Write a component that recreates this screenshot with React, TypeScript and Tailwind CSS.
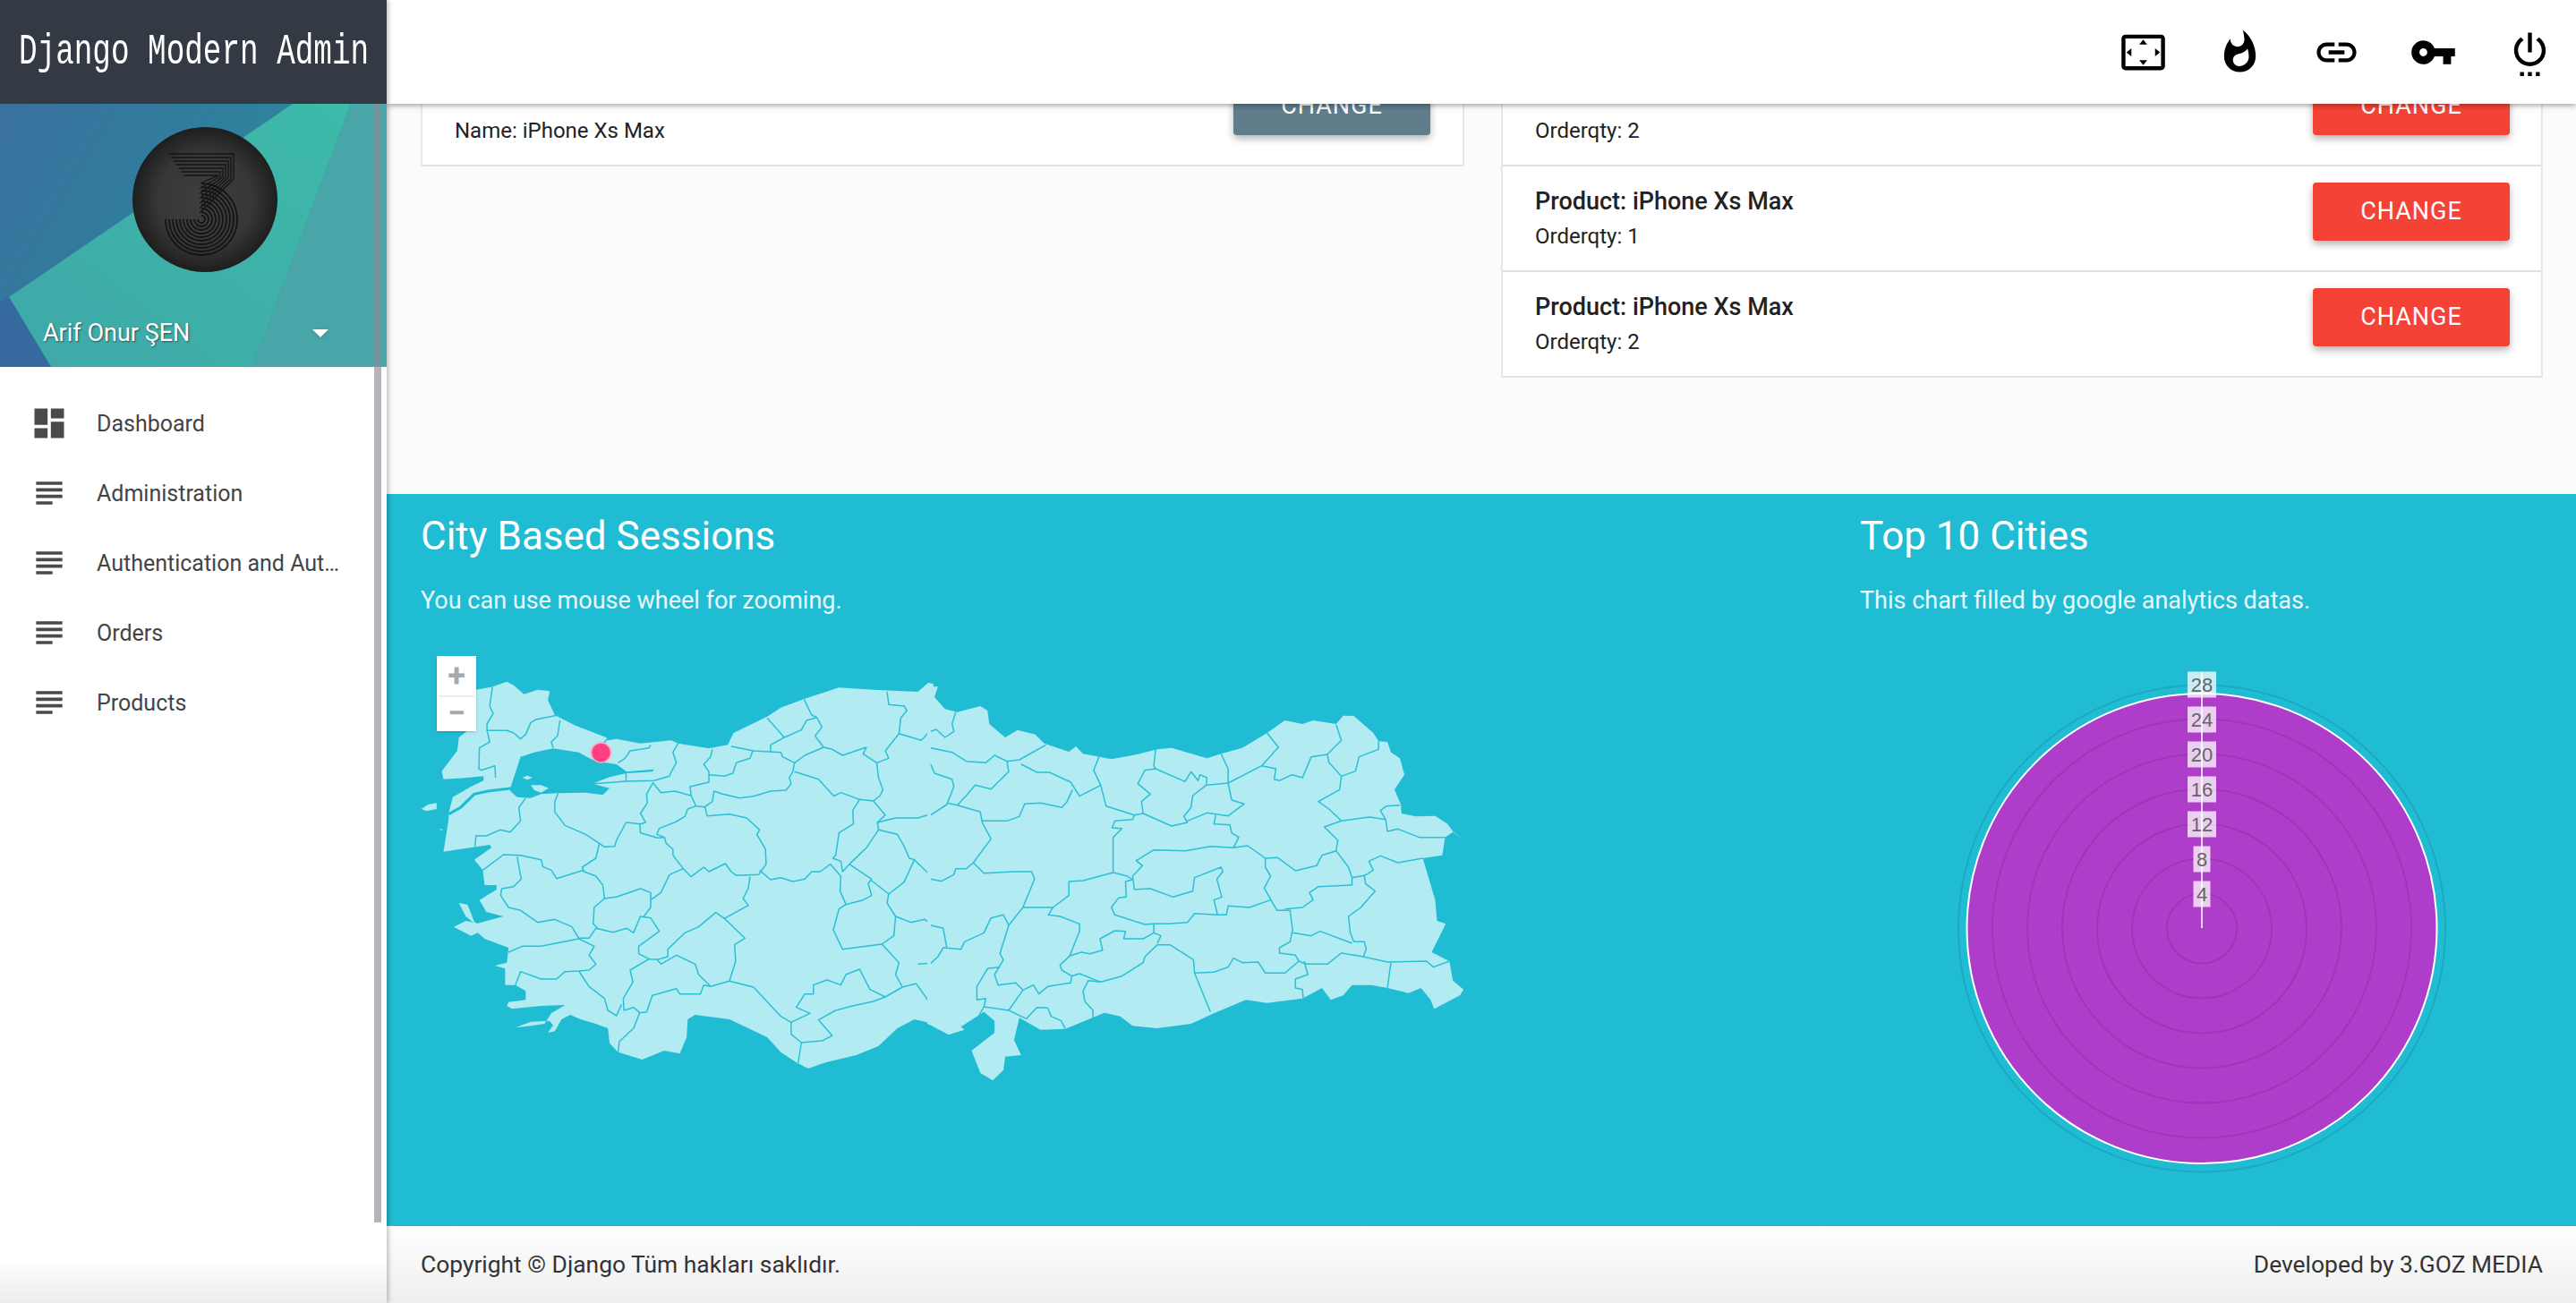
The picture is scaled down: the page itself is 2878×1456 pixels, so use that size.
import React from 'react';

const westLand =
  '240,215 290,205 330,188 350,200 380,230 420,215 455,220 450,250 470,300 530,335 620,375 625,385 650,380 720,395 810,385 830,395 920,412 975,400 992,360 1090,305 1130,275 1200,245 1300,208 1400,215 1530,222 1560,192 1575,195 1575,1335 1520,1320 1470,1350 1415,1410 1350,1440 1260,1465 1210,1485 1175,1465 1130,1430 1090,1380 980,1320 880,1305 858,1320 855,1380 835,1435 790,1425 725,1455 655,1430 630,1400 625,1350 590,1335 545,1320 515,1305 490,1320 470,1360 450,1365 465,1340 455,1325 400,1328 355,1348 400,1342 440,1335 460,1300 500,1272 430,1275 345,1285 330,1275 335,1262 385,1255 385,1225 355,1205 325,1205 325,1150 295,1140 330,1130 335,1080 265,1050 245,1030 225,1040 175,1010 210,990 245,998 320,975 270,960 250,920 300,885 300,870 265,870 260,820 235,785 285,745 280,735 145,758 160,650 160,630 172,575 225,540 262,520 262,505 215,510 145,515 140,488 185,420 190,375 240,330';

const marmara =
  '340,545 370,440 410,425 465,412 540,425 580,450 610,458 650,465 680,490 760,482 755,490 680,495 630,508 580,530 630,545 610,568 560,560 480,562 430,565 400,578 360,575 340,555';

const eastLand =
  '-10,85 20,85 10,120 40,160 75,170 140,150 160,165 165,210 210,255 245,230 295,245 320,275 390,303 410,285 430,310 510,328 570,315 640,295 680,290 780,325 820,310 880,290 950,240 1000,198 1050,210 1080,198 1145,210 1165,182 1195,183 1250,240 1265,268 1290,270 1300,305 1325,325 1338,380 1310,430 1328,480 1330,510 1370,520 1425,518 1460,545 1475,570 1503,597 1475,572 1453,590 1445,650 1390,660 1405,720 1425,800 1430,870 1455,880 1415,975 1465,1005 1475,1070 1505,1100 1495,1120 1430,1160 1422,1165 1412,1135 1385,1095 1350,1112 1290,1095 1245,1085 1190,1085 1165,1120 1130,1135 1105,1095 1050,1130 950,1145 890,1135 800,1180 735,1215 640,1230 570,1222 535,1190 490,1178 380,1232 310,1235 250,1195 235,1270 255,1320 210,1325 205,1370 175,1405 140,1380 115,1305 180,1245 180,1205 150,1175 85,1225 95,1235 50,1252 0,1220 -10,1215';

const westLines = [
  '288,205 280,270 290,295 272,330 272,352 330,352 350,360 370,380 385,365 400,325 415,315 480,300',
  '272,352 280,390 250,410 248,480 255,485 295,470 297,510',
  '485,318 478,370 460,390 465,410',
  '625,378 600,410',
  '750,400 745,410 690,420 675,445 655,460',
  '830,395 815,425 825,460 810,490 805,505 760,520 680,522 610,528 580,530',
  '678,490 678,522',
  '755,525 780,560 820,555 868,570 882,605',
  '755,530 738,565 740,595 720,630 735,660 720,665 678,660 650,720 645,740 615,742 600,730 560,700 500,670 470,625 470,590 480,562',
  '930,415 925,440 905,465 920,490 920,525 865,540 868,570',
  '920,500 965,505 990,495 1000,460 1040,445 1048,420',
  '985,405 1050,420 1130,425 1135,440 1170,460 1165,490 1155,510 1160,530 1145,552 1100,555 1050,572 1010,578 960,565 935,555 930,590 908,608 882,605 858,615 850,640 820,660 775,680 768,700 790,710 770,712 720,695 718,665',
  '1090,310 1140,375 1100,400 1100,425',
  '1140,375 1190,350 1205,318 1235,308 1250,340 1230,370 1255,408 1200,435 1170,460',
  '1198,248 1220,300 1235,308',
  '1255,408 1280,415 1310,435 1380,408 1370,430 1410,460 1445,445 1435,420 1475,362 1480,310 1498,285 1490,270 1445,265 1440,222',
  '1475,362 1540,385 1568,350',
  '1410,460 1415,510 1428,550 1420,570 1400,588 1360,583 1305,560 1285,572 1240,515 1170,490',
  '1360,583 1340,620 1342,665 1300,695 1290,770 1282,780 1305,790 1310,825 1330,800',
  '1400,588 1435,635 1412,660 1415,685 1380,745 1330,800 1395,850 1385,865 1395,905 1370,920 1320,935 1303,890 1305,840 1275,800 1245,825 1220,825 1200,850 1165,858 1130,845 1100,852 1068,820',
  '908,608 915,638 980,632 1030,645 1068,685 1060,700 1085,750 1087,800 1065,835 1000,838 985,825 968,798 920,825 905,810 868,842 845,815 815,770 815,750 795,730 790,710',
  '845,815 805,835 780,895 750,920 750,895 720,882 650,910 615,915 610,870 590,840 555,825 550,810 590,780 600,730',
  '555,820 475,848 460,820 435,808 430,785 370,770 320,768 260,820',
  '360,775 372,850 350,875 315,882 312,905 335,945 370,955 420,995 470,985 520,1010 540,1048 570,1048 590,1015 640,1028 680,1015 700,1030 720,975 750,980 775,1025 715,1075 715,1100 745,1118 690,1155 698,1195 670,1250 672,1290 700,1280 718,1298 700,1350 658,1395 655,1430',
  '615,915 585,945 582,1000 595,1015',
  '750,920 750,945 730,975',
  '1040,842 1035,880 1020,915 1035,938 965,982 940,962 890,1010 850,1030 800,1085 800,1110 770,1120 745,1118',
  '965,982 1025,1048 995,1070 998,1125 980,1192 925,1210 890,1170 880,1135 825,1105 780,1135 770,1122',
  '980,1192 1050,1212 1130,1310 1160,1330 1215,1300 1175,1280 1200,1235 1225,1235 1225,1205 1265,1188 1305,1205 1320,1170 1360,1152 1390,1220 1435,1245 1485,1212 1525,1200',
  '925,1210 905,1205 895,1235 835,1235 825,1217 755,1240 738,1295 718,1298',
  '1160,1330 1160,1370 1190,1398 1250,1392 1280,1375 1240,1322 1290,1290 1340,1275 1400,1260 1435,1245',
  '1190,1398 1180,1470',
  '1320,935 1300,950 1283,1020 1310,1085 1425,1068 1460,1040 1465,975 1440,930 1445,900',
  '1395,855 1445,900 1490,860 1520,785 1505,780 1490,740 1470,700 1415,685',
  '1425,1068 1475,1130 1465,1170 1485,1212',
  '540,1158 570,1210 615,1250 625,1290 650,1308 665,1270',
  '335,1095 375,1075 430,1075 540,1050 585,1075 570,1105 590,1135 570,1155 540,1158 500,1160 475,1185 430,1185 370,1160 355,1205',
  '237,740 240,705 270,705 310,685 340,692 370,655 365,610 385,578',
  '1465,975 1510,995 1550,985 1568,1000',
  '1520,785 1560,830 1568,870',
  '1412,660 1465,645 1530,645 1568,632',
  '1530,1135 1568,1132',
  '1525,1200 1568,1270',
];

const eastLines = [
  '70,170 60,210 65,235 40,255 15,228 0,235',
  '0,290 60,305 100,335 155,340 180,315 215,335 250,330 325,280',
  '0,345 10,375 60,395 65,420 45,480 0,515',
  '45,475 75,482 140,505 145,540 170,595 120,675 100,695 70,695 65,715 30,737 0,730',
  '75,482 100,450 125,415 170,428 220,370 215,335',
  '255,345 300,372 335,372 395,405 420,452 480,415 460,365 475,320',
  '400,430 385,470 370,490 310,475 265,478 250,520 215,535 145,535',
  '480,415 495,485 535,500 575,515 570,530 520,535 512,558 540,560 515,590 515,705',
  '575,515 600,510 680,552 725,540 715,520 735,490 740,450 778,415 780,390 760,380 755,400 735,370 718,403 635,360 605,365 585,410 620,445 595,470 600,510',
  '635,295 630,350 635,360',
  '820,310 840,360 840,408 780,415',
  '840,408 935,350 982,288 950,240',
  '935,350 975,360 970,395 985,400 1020,380 1050,390 1075,320 1120,312 1160,265 1145,212',
  '1120,312 1125,340 1160,385 1200,368 1210,320 1265,295 1265,268',
  '840,408 850,465 885,478 840,518 780,508 725,535',
  '805,515 800,545 845,548 850,575 870,590 855,625 790,620 720,635 630,632 580,668 598,685 570,720 575,765 620,762 685,790 740,770 745,725 820,690 825,705 808,730 822,790 800,800 810,850 745,845 725,875 670,880 630,880 605,882 520,850 510,825 530,793 552,790 550,738 570,732 555,720 515,708 430,735 390,738 390,785 345,825 260,825',
  '855,625 895,618 945,660 945,690 960,720 942,760 978,835 1015,835 1022,900 1015,940 985,960 985,978 1030,985 1040,1005 1000,1045 945,1045 925,1008 880,1010 855,995 840,1025 800,1042 745,1045 742,1000 675,950 640,950 605,990 600,1010 580,1025 540,1055 480,1075 420,1047 398,1055 370,1035 365,1018 392,988',
  '945,660 980,658 1030,702 1090,685 1105,650 1145,635 1150,600 1112,555 1160,535 1125,495 1095,470 1155,430 1160,385',
  '1160,535 1240,522 1285,530 1290,570 1320,562 1380,590 1453,590',
  '1285,530 1270,500 1288,485 1325,482',
  '1145,635 1180,690 1190,725 1225,718 1250,700 1238,670 1270,652 1320,675 1390,660',
  '1190,750 1095,755 1070,775 1080,800 1050,825 1000,830',
  '1190,725 1190,750',
  '1225,718 1228,745 1255,770 1215,825 1180,855 1185,910 1195,940 1225,940 1230,965 1222,990 1290,1008 1400,1005 1420,1025 1465,1005',
  '1022,910 1075,920 1100,905 1190,945',
  '1040,1005 1060,1015 1120,1015 1160,978 1222,990',
  '1300,1010 1290,1095',
  '1055,1005 1065,1050 1030,1065 1030,1095 1050,1100 1052,1130',
  '745,1045 790,1175',
  '960,800 900,825 840,820 835,850 810,850',
  '630,880 630,910 650,920 640,945',
  '630,910 600,930 545,930 550,905 520,903 478,930 485,968 450,980 425,975 392,988 420,905 420,880 365,855 332,850 345,825',
  '260,825 220,885 205,850 170,860 150,910 95,940 85,965 35,960 20,990 0,1012',
  '120,675 150,710 235,705 285,705 293,730 260,825',
  '220,885 195,980 205,1000 180,1050 190,1085 240,1078 260,1102 290,1085 305,1115 330,1090 395,1078 398,1055',
  '195,1025 160,1030 130,1090 130,1135 155,1130 150,1158 135,1190',
  '260,1102 220,1170 150,1158',
  '220,1170 270,1198 300,1160 330,1162 340,1190 368,1205 380,1232',
  '480,1075 445,1070 430,1105 435,1140 458,1170 458,1195',
  '0,885 35,895 45,960',
];

const teal = '#20bcd4';
const land = '#b2ebf2';

const TurkeyMap = () => (
  <svg viewBox="460 720 1200 500" className="block w-[1200px] h-[500px]">
    <g transform="translate(440 700) scale(0.38265 0.33333)">
      <polygon points={westLand} fill={land} />
      <polygon points={marmara} fill={teal} />
      <polyline points="160,632 195,610 235,565 275,555 345,545" fill="none" stroke={teal} strokeWidth="9" />
      <polygon points="375,510 390,503 405,510 390,517" fill={land} />
      <polygon points="400,535 430,535 452,545 430,560 410,552" fill={land} />
      <polygon points="80,615 100,600 125,595 125,615 95,622" fill={land} />
      <polygon points="130,680 142,683 142,688" fill={land} />
      <polygon points="190,930 215,935 232,985 240,1003 210,975" fill={land} />
      {westLines.map((l, i) => (
        <polyline key={i} points={l} fill="none" stroke="#2cbfd6" strokeWidth="1.5" strokeLinejoin="round" vectorEffect="non-scaling-stroke" />
      ))}
    </g>
    <g transform="translate(1040 740) scale(0.3954 0.33333)">
      <polygon points={eastLand} fill={land} />
      {eastLines.map((l, i) => (
        <polyline key={i} points={l} fill="none" stroke="#2cbfd6" strokeWidth="1.5" strokeLinejoin="round" vectorEffect="non-scaling-stroke" />
      ))}
    </g>
    <circle cx="671.5" cy="842" r="11" fill="#ff4081" stroke="#ffa6c4" strokeWidth="1.5" />
  </svg>
);

const radarLabels = [
  { v: '28', y: 766 },
  { v: '24', y: 805 },
  { v: '20', y: 844 },
  { v: '16', y: 883 },
  { v: '12', y: 922 },
  { v: '8', y: 961 },
  { v: '4', y: 1000 },
];

const RadarChart = () => (
  <svg viewBox="2160 740 600 600" className="block w-[600px] h-[600px]">
    <circle cx="2460" cy="1038.5" r="262.5" fill="#ae3ec9" stroke="#fff" strokeWidth="2" />
    {[39, 78, 117, 156, 195, 234, 272].map(r => (
      <circle key={r} cx="2460" cy="1038.5" r={r} fill="none" stroke="rgba(0,0,0,0.1)" strokeWidth="2" />
    ))}
    <line x1="2460" y1="752" x2="2460" y2="1038" stroke="#fff" strokeOpacity="0.8" strokeWidth="2" />
    {radarLabels.map(l => {
      const w = l.v.length === 2 ? 32 : 19;
      return (
        <g key={l.v}>
          <rect x={2460 - w / 2} y={l.y - 14.5} width={w} height="29" fill="#fff" fillOpacity="0.75" />
          <text x="2460" y={l.y + 8} textAnchor="middle" fontSize="22" fill="#666" fontFamily="'Liberation Sans', sans-serif">
            {l.v}
          </text>
        </g>
      );
    })}
  </svg>
);

// 3.goz logo on the avatar
const Avatar = () => (
  <svg viewBox="0 0 162 162" className="w-[162px] h-[162px]">
    <defs>
      <radialGradient id="avatarBg">
        <stop offset="0%" stopColor="#3e3e3e" />
        <stop offset="65%" stopColor="#373737" />
        <stop offset="100%" stopColor="#1e1e1e" />
      </radialGradient>
    </defs>
    <circle cx="81" cy="81" r="81" fill="url(#avatarBg)" />
    {[0, 1, 2, 3, 4, 5, 6].map(i => (
      <path
        key={i}
        d={`M${40 + i * 2.9} ${30 + i * 4}H${113 - i * 3}V${58 - i * 0.6}L${75 + i * 0.1} ${96 - i * 5.5}`}
        fill="none"
        stroke="#141414"
        strokeWidth="1.3"
      />
    ))}
    {[4, 8, 12, 16, 20, 24, 28, 32, 36, 40].map(r => (
      <path key={r} d={`M${77 - r} 103A${r} ${r} 0 1 0 77 ${103 - r}`} fill="none" stroke="#141414" strokeWidth="1.8" />
    ))}
  </svg>
);

const UserPanel = () => (
  <div className="relative h-[294px] bg-[#35789f] overflow-hidden">
    <svg viewBox="0 0 432 294" className="absolute inset-0 w-full h-full">
      <defs>
        <linearGradient id="blueBg" x1="0" y1="0" x2="1" y2="0.4">
          <stop offset="0%" stopColor="#3a709f" />
          <stop offset="50%" stopColor="#2f7e9c" />
          <stop offset="100%" stopColor="#2f8ea0" />
        </linearGradient>
        <linearGradient id="tealBg" x1="1" y1="0" x2="0" y2="1">
          <stop offset="0%" stopColor="#3dbaa8" />
          <stop offset="100%" stopColor="#3fa8a8" />
        </linearGradient>
      </defs>
      <rect width="432" height="294" fill="url(#blueBg)" />
      <polygon points="10,216 327,0 392,0 282,294 57,294" fill="url(#tealBg)" />
      <polygon points="392,0 432,0 432,294 282,294" fill="#48a6a8" />
      <polygon points="0,221 10,216 57,294 0,294" fill="#35699f" />
    </svg>
    <div className="relative flex justify-center pt-[26px] pl-[26px]">
      <Avatar />
    </div>
    <div className="relative flex items-center justify-between pl-[48px] pr-[65px] mt-[48px]">
      <span className="text-[27px] leading-[40px] text-white [text-shadow:1px_1px_2px_rgba(0,0,0,0.5)]">Arif Onur ŞEN</span>
      <svg width="18" height="9" viewBox="0 0 18 9" className="drop-shadow-sm">
        <polygon points="0,0 18,0 9,9" fill="#fff" />
      </svg>
    </div>
  </div>
);

const SubjectIcon = () => (
  <svg viewBox="0 0 24 24" className="w-[44px] h-[44px] fill-[#4a4a4a]">
    <path d="M14 17H4v2h10v-2zm6-8H4v2h16V9zM4 15h16v-2H4v2zM4 5v2h16V5H4z" />
  </svg>
);

const DashboardIcon = () => (
  <svg viewBox="0 0 24 24" className="w-[44px] h-[44px] fill-[#4a4a4a]">
    <path d="M3 13h8V3H3v10zm0 8h8v-6H3v6zm10 0h8V11h-8v10zm0-18v6h8V3h-8z" />
  </svg>
);

const menu = ['Administration', 'Authentication and Authorization', 'Orders', 'Products'];

const MenuRow = ({ label, icon }: { label: string; icon: React.ReactNode }) => (
  <div className="flex items-center h-[78px] pl-[33px]">
    {icon}
    <span className="ml-[31px] w-[281px] truncate text-[25px] leading-[36px] pt-[1px] text-[#444]">{label}</span>
  </div>
);

const Sidebar = () => (
  <aside className="relative z-20 w-[432px] shrink-0 h-full flex flex-col bg-white shadow-[2px_0_5px_rgba(0,0,0,0.25)]">
    <div className="h-[116px] shrink-0 bg-[#343a43] flex items-center pl-[21px]">
      <span className="inline-block font-['Liberation_Mono',monospace] text-[34.3px] leading-none text-white scale-y-[1.4] whitespace-nowrap">
        Django Modern Admin
      </span>
    </div>
    <UserPanel />
    <nav className="pt-[24px]">
      <MenuRow label="Dashboard" icon={<DashboardIcon />} />
      {menu.map(m => (
        <MenuRow key={m} label={m} icon={<SubjectIcon />} />
      ))}
    </nav>
    <div className="absolute left-[418px] top-[116px] w-[8px] h-[1250px] bg-[#8d8b96]/65" />
    <div className="absolute left-0 right-0 bottom-0 h-[50px] bg-gradient-to-b from-white to-[#ececec]" />
  </aside>
);

const topIcons = [
  'M12.01 5.5L10 8h4l-1.99-2.5zM18 10v4l2.5-1.99L18 10zM6 10l-2.5 2.01L6 14v-4zm8 6h-4l2.01 2.5L14 16zm7-13H3c-1.1 0-2 .9-2 2v14c0 1.1.9 2 2 2h18c1.1 0 2-.9 2-2V5c0-1.1-.9-2-2-2zm0 16.01H3V4.99h18v14.02z',
  'M13.5.67s.74 2.65.74 4.8c0 2.06-1.35 3.73-3.41 3.73-2.07 0-3.63-1.67-3.63-3.73l.03-.36C5.21 7.51 4 10.62 4 14c0 4.42 3.58 8 8 8s8-3.58 8-8C20 8.61 17.41 3.8 13.5.67zM11.71 19c-1.78 0-3.22-1.4-3.22-3.14 0-1.62 1.05-2.76 2.81-3.12 1.77-.36 3.6-1.21 4.62-2.58.39 1.29.59 2.65.59 4.04 0 2.65-2.15 4.8-4.8 4.8z',
  'M3.9 12c0-1.71 1.39-3.1 3.1-3.1h4V7H7c-2.76 0-5 2.24-5 5s2.24 5 5 5h4v-1.9H7c-1.71 0-3.1-1.39-3.1-3.1zM8 13h8v-2H8v2zm9-6h-4v1.9h4c1.71 0 3.1 1.39 3.1 3.1s-1.39 3.1-3.1 3.1h-4V17h4c2.76 0 5-2.24 5-5s-2.24-5-5-5z',
  'M12.65 10C11.83 7.67 9.61 6 7 6c-3.31 0-6 2.69-6 6s2.69 6 6 6c2.61 0 4.83-1.67 5.65-4H17v4h4v-4h2v-4H12.65zM7 14c-1.1 0-2-.9-2-2s.9-2 2-2 2 .9 2 2-.9 2-2 2z',
  'M7 24h2v-2H7v2zm4 0h2v-2h-2v2zm2-22h-2v10h2V2zm3.56 2.44l-1.45 1.45C16.84 6.94 18 8.83 18 11c0 3.31-2.69 6-6 6s-6-2.69-6-6c0-2.17 1.16-4.06 2.88-5.12L7.44 4.44C5.36 5.88 4 8.28 4 11c0 4.42 3.58 8 8 8s8-3.58 8-8c0-2.72-1.36-5.12-3.44-6.56zM15 24h2v-2h-2v2z',
];

const TopBar = () => (
  <header className="relative z-10 h-[116px] shrink-0 bg-white shadow-[0_2px_6px_rgba(0,0,0,0.35)] flex items-center justify-end">
    {topIcons.map((d, i) => (
      <div key={i} className="w-[108px] flex justify-center last:-mr-[2px]">
        <svg viewBox="0 0 24 24" className="w-[53px] h-[53px] fill-black">
          <path d={d} />
        </svg>
      </div>
    ))}
  </header>
);

const ChangeButton = ({ color }: { color: string }) => (
  <button className={`w-[220px] h-[65px] rounded text-white text-[27px] tracking-[1px] shadow-[0_4px_8px_rgba(0,0,0,0.3)] ${color}`}>
    CHANGE
  </button>
);

const OrderRow = ({ qty }: { qty: number }) => (
  <div className="flex justify-between border-b-2 border-[#e0e0e0] h-[118px] pl-[36px] pr-[35px] pt-[18px]">
    <div className="pt-[1px]">
      <div className="text-[27px] leading-[40px] font-medium text-[#222]">Product: iPhone Xs Max</div>
      <div className="text-[24px] leading-[38px] text-[#222]">Orderqty: {qty}</div>
    </div>
    <ChangeButton color="bg-[#f44336]" />
  </div>
);

const Cards = () => (
  <div className="bg-[#fbfbfb] flex gap-[41px] pl-[38px] pr-[37px] pb-[130px] items-start">
    <div className="w-[1166px] shrink-0 bg-white border-x-2 border-[#e8e8e8]">
      <div className="flex justify-between border-b-2 border-[#e0e0e0] h-[118px] pl-[36px] pr-[36px] pt-[18px]">
        <div className="pt-[1px]">
          <div className="text-[24px] leading-[40px] text-[#222]">Code: 1</div>
          <div className="text-[24px] leading-[38px] text-[#222]">Name: iPhone Xs Max</div>
        </div>
        <ChangeButton color="bg-[#607d8b]" />
      </div>
    </div>
    <div className="flex-1 bg-white border-x-2 border-[#e8e8e8]">
      <OrderRow qty={2} />
      <OrderRow qty={1} />
      <OrderRow qty={2} />
    </div>
  </div>
);

const Analytics = () => (
  <section className="h-[818px] shrink-0 bg-[#20bcd4] text-white flex px-[38px]">
    <div className="w-[1608px] shrink-0">
      <h2 className="text-[44px] leading-[52px] mt-[21px]">City Based Sessions</h2>
      <p className="text-[27px] leading-[36px] mt-[28px] text-white/90">You can use mouse wheel for zooming.</p>
      <div className="relative -ml-[10px] mt-[30px] w-[1200px]">
        <TurkeyMap />
        <div className="absolute left-[28px] top-[14px] w-[44px] bg-white shadow-[0_1px_3px_rgba(0,0,0,0.2)] p-[2px] flex flex-col gap-[2px]">
          <div className="h-[40px] bg-white flex items-center justify-center text-[#a9a9a9] text-[36px] font-bold leading-none">+</div>
          <div className="h-[38px] bg-white flex items-center justify-center text-[#a9a9a9] text-[36px] font-bold leading-none border-t-2 border-[#eee]">−</div>
        </div>
      </div>
    </div>
    <div className="flex-1">
      <h2 className="text-[44px] leading-[52px] mt-[21px]">Top 10 Cities</h2>
      <p className="text-[27px] leading-[36px] mt-[28px] text-white/90">This chart filled by google analytics datas.</p>
      <div className="ml-[82px] mt-[50px]">
        <RadarChart />
      </div>
    </div>
  </section>
);

const Footer = () => (
  <footer className="h-[86px] shrink-0 bg-gradient-to-b from-white to-[#eeeeee] flex items-center justify-between pl-[38px] pr-[37px] text-[26.4px] text-[#333] pt-[2px]">
    <span>Copyright © Django Tüm hakları saklıdır.</span>
    <span>Developed by 3.GOZ MEDIA</span>
  </footer>
);

export default function App() {
  return (
    <div className="flex h-screen w-full overflow-hidden bg-white font-[Roboto,sans-serif]">
      <Sidebar />
      <main className="flex-1 min-w-0 flex flex-col h-full">
        <TopBar />
        <div className="flex-1 min-h-0 overflow-hidden flex flex-col justify-end">
          <Cards />
          <Analytics />
          <Footer />
        </div>
      </main>
    </div>
  );
}
